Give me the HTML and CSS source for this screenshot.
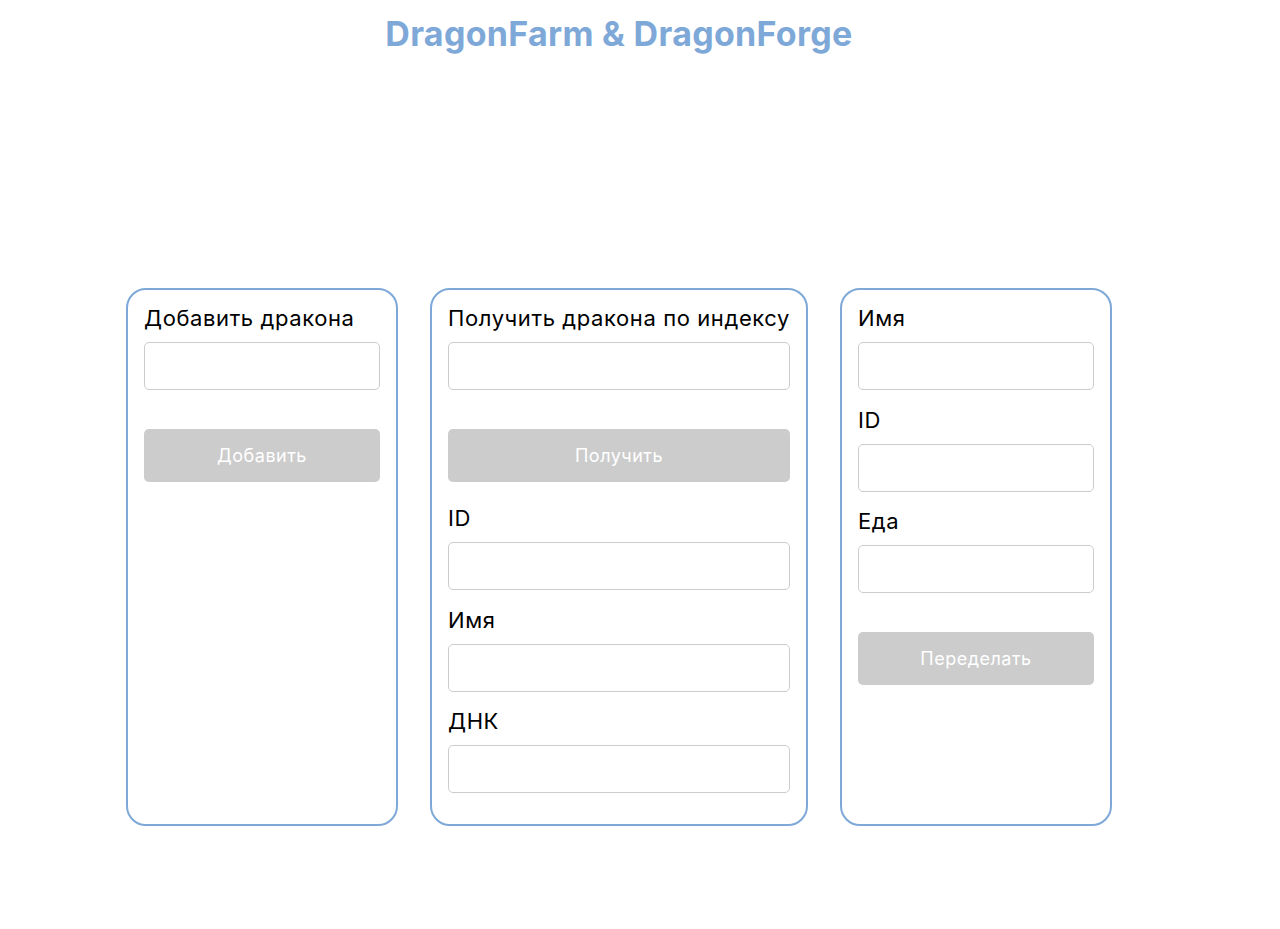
FILE: index.html
```html
<!DOCTYPE html>
<html lang="ru">
<head>
<meta charset="utf-8">
<title>DragonFarm & DragonForge</title>
<link rel="stylesheet" href="styles.css">
</head>
<body>
<div class="page">
  <h1 class="title">DragonFarm &amp; DragonForge</h1>
  <div class="cards">
    <section class="card card-small">
      <label class="label">Добавить дракона</label>
      <input class="field" type="text">
      <button class="btn">Добавить</button>
    </section>
    <section class="card card-wide">
      <label class="label">Получить дракона по индексу</label>
      <input class="field" type="text">
      <button class="btn">Получить</button>
      <label class="label">ID</label>
      <input class="field" type="text">
      <label class="label">Имя</label>
      <input class="field" type="text">
      <label class="label">ДНК</label>
      <input class="field" type="text">
    </section>
    <section class="card card-small">
      <label class="label">Имя</label>
      <input class="field" type="text">
      <label class="label">ID</label>
      <input class="field" type="text">
      <label class="label">Еда</label>
      <input class="field" type="text">
      <button class="btn">Переделать</button>
    </section>
  </div>
</div>
</body>
</html>
```

FILE: styles.css
```css
html, body {
  margin: 0;
  padding: 0;
  background: #ffffff;
}

body {
  font-family: Inter, "Liberation Sans", Arial, sans-serif;
  color: #000;
}

.page {
  padding-right: 42px;
  display: flex;
  flex-direction: column;
  align-items: center;
}

.title {
  margin: 13px 0 0;
  font-size: 34px;
  line-height: 42px;
  letter-spacing: 0.3px;
  font-weight: 700;
  color: #7ea8d7;
}

.cards {
  margin-top: 233px;
  display: flex;
  align-items: stretch;
  gap: 32px;
}

.card {
  box-sizing: border-box;
  border: 2.5px solid #7ea8d7;
  border-radius: 20px;
  padding: 16px 16px 13px;
  display: flex;
  flex-direction: column;
}

.card-small {
  width: 272px;
}

.card-wide {
  width: 378px;
}

.label {
  display: block;
  white-space: nowrap;
  font-size: 22px;
  line-height: 24px;
  letter-spacing: 0.6px;
  margin-bottom: 12px;
}

.field {
  box-sizing: border-box;
  display: block;
  width: 100%;
  height: 48px;
  margin: 0 0 17.5px;
  border: 1.5px solid #cccccc;
  border-radius: 5px;
  background: #fff;
  font-size: 16px;
  padding: 0 10px;
}

.btn {
  box-sizing: border-box;
  display: block;
  width: 100%;
  height: 53px;
  margin: 21.5px 0 24px;
  border: none;
  border-radius: 5px;
  background: #cccccc;
  color: #ffffff;
  font-family: Inter, "Liberation Sans", Arial, sans-serif;
  font-size: 18px;
  letter-spacing: 0.5px;
}
```
